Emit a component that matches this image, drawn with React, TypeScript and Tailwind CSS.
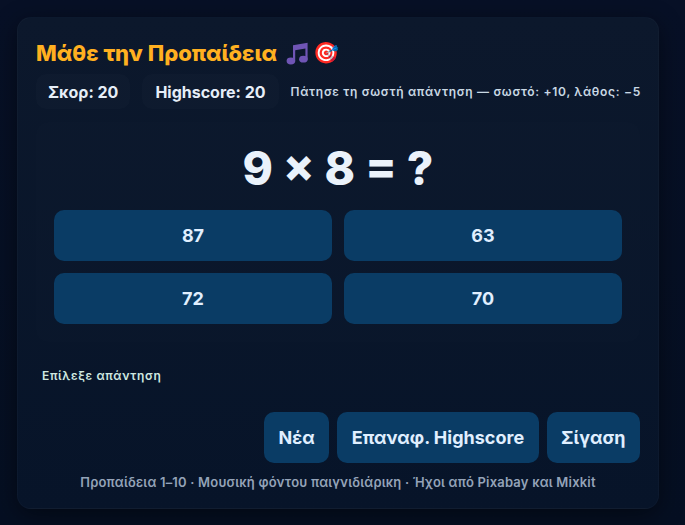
import React from 'react'

const answers = ['87', '63', '72', '70']

const NoteIcon = () => (
    <svg width="24" height="24" viewBox="0 0 24 24" className="shrink-0">
        <path fill="#6f55b5" d="M8 4.2 22.6 1.8V18.4h-2.2V7.6L10.2 9.3V20.4H8Z" />
        <ellipse cx="5.9" cy="20" rx="4.3" ry="3.4" fill="#6f55b5" />
        <ellipse cx="18.4" cy="18.2" rx="4.3" ry="3.4" fill="#6f55b5" />
    </svg>
)

const App = () => {
    return (
        <div className="h-[525px] w-[685px] overflow-hidden bg-gradient-to-b from-[#071026] to-[#050f22] p-[17px] font-['Inter',sans-serif] text-[#e6eef8]">
            <div className="flex h-[492px] w-[642px] flex-col rounded-[14px] border border-[#ffffff06] bg-gradient-to-b from-[#0c182c] to-[#071429] px-[18px] pt-[18px] shadow-[0_6px_24px_rgba(0,0,0,0.45)]">
                <h1 className="flex h-[34px] items-center text-[22px] font-extrabold text-[#ffb020]">
                    Μάθε την Προπαίδεια
                    <span className="ml-[8px]"><NoteIcon /></span>
                    <span className="ml-[4px] text-[21px] font-normal">🎯</span>
                </h1>
                <div className="mt-[4px] flex items-center gap-[12px]">
                    <div className="flex h-[35px] shrink-0 items-center rounded-[10px] bg-[#ffffff04] px-[12px] text-[16px] font-bold whitespace-nowrap">Σκορ: 20</div>
                    <div className="flex h-[35px] shrink-0 items-center rounded-[10px] bg-[#ffffff04] px-[13px] text-[16px] font-bold whitespace-nowrap">Highscore: 20</div>
                    <div className="text-[12px] font-semibold tracking-[0.69px] whitespace-nowrap text-[#c9d8e4]">Πάτησε τη σωστή απάντηση — σωστό: +10, λάθος: −5</div>
                </div>
                <div className="mt-[13px] h-[220px] rounded-[12px] bg-[#ffffff02] px-[18px] pt-[18px]">
                    <div className="text-center text-[46px] leading-[56px] font-extrabold text-[#eaf2fb]">9 × 8 = ?</div>
                    <div className="mt-[14px] grid grid-cols-2 gap-[12px]">
                        {answers.map((a) => (
                            <button key={a} className="h-[51px] rounded-[10px] bg-[#0a3c65] text-[18px] font-bold text-[#e0efff]">{a}</button>
                        ))}
                    </div>
                </div>
                <div className="mt-[25px] pl-[6px] text-[12px] font-semibold tracking-[0.65px] text-[#cfe8e0]">Επίλεξε απάντηση</div>
                <div className="mt-[27px] flex justify-end gap-[8px]">
                    <button className="h-[51px] rounded-[10px] bg-[#0a3c65] px-[14.5px] text-[18px] font-bold text-[#e0efff]">Νέα</button>
                    <button className="h-[51px] rounded-[10px] bg-[#0a3c65] px-[14.5px] text-[18px] font-bold text-[#e0efff]">Επαναφ. Highscore</button>
                    <button className="h-[51px] rounded-[10px] bg-[#0a3c65] px-[14.5px] text-[18px] font-bold text-[#e0efff]">Σίγαση</button>
                </div>
                <div className="mt-[10px] text-center text-[13px] font-semibold tracking-[0.2px] whitespace-nowrap text-[#94a3b8]">Προπαίδεια 1–10 · Μουσική φόντου παιγνιδιάρικη · Ήχοι από Pixabay και Mixkit</div>
            </div>
        </div>
    )
}

export default App
